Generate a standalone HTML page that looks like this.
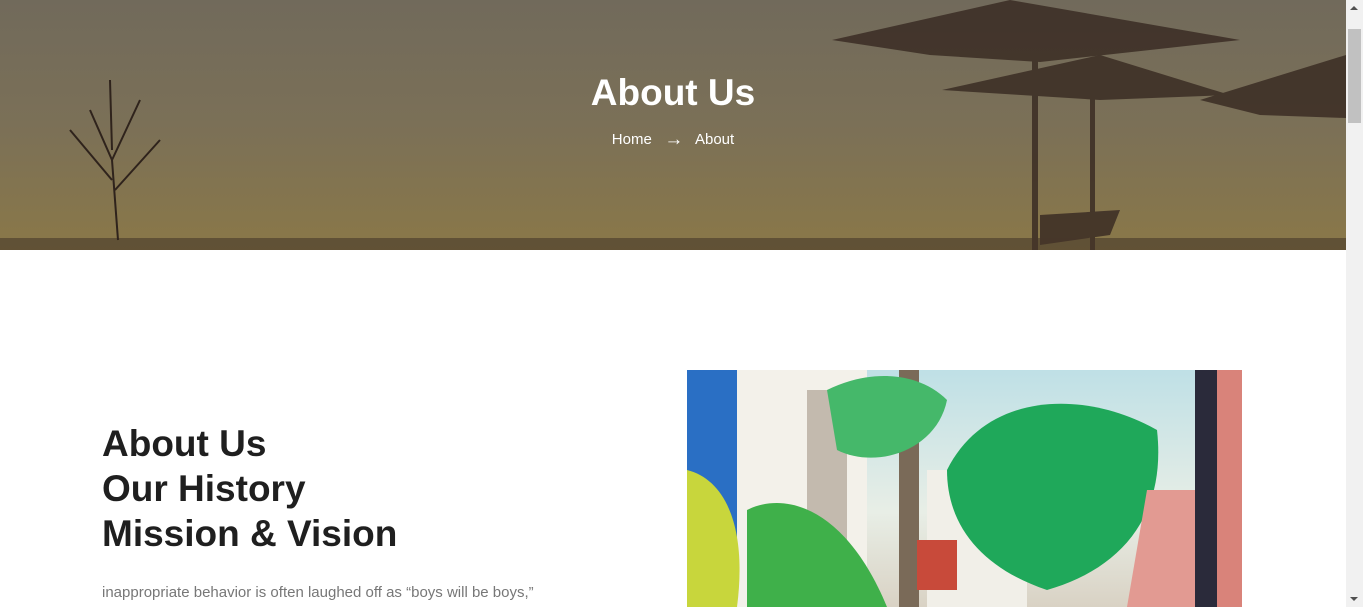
<!DOCTYPE html>
<html><head><meta charset="utf-8"><style>
html,body{margin:0;padding:0;width:1363px;height:607px;overflow:hidden;background:#fff;font-family:"Liberation Sans",sans-serif}
.hero{position:absolute;left:0;top:0;width:1346px;height:250px;background:linear-gradient(180deg,#716a5b 0%,#7b7057 50%,#8a7848 100%);overflow:hidden}
.hero h1{position:absolute;left:0;width:1346px;top:72px;margin:0;text-align:center;color:#fff;font-size:37px;font-weight:700}
.crumb{position:absolute;left:0;width:1346px;top:128px;text-align:center;color:#fff;font-size:15px}
.sb{position:absolute;left:1346px;top:0;width:17px;height:607px;background:#f1f1f1}
.thumb{position:absolute;left:1348px;top:29px;width:13px;height:94px;background:#c1c1c1}
h2{position:absolute;left:102px;top:421px;margin:0;font-size:37px;line-height:45px;font-weight:600;color:#1f1f1f}
p{position:absolute;left:102px;top:584px;margin:0;font-size:15px;color:#777}
.img{position:absolute;left:687px;top:370px;width:555px;height:237px;overflow:hidden;background:linear-gradient(180deg,#bfe0e6 0%,#e8eee6 60%,#d9d2c4 100%)}
</style></head><body>
<div class="hero">
<svg width="1346" height="250" style="position:absolute;left:0;top:0">
<g fill="#3a2c24" opacity=".85">
<path d="M832 40 L1010 0 L1240 40 L1150 50 L1040 62 L930 55Z"/>
<path d="M942 90 L1100 55 L1230 95 L1100 100Z"/>
<path d="M1200 100 L1346 55 L1346 118 L1260 115Z"/>
<rect x="1032" y="40" width="6" height="210"/><rect x="1090" y="80" width="5" height="170"/>
<path d="M1040 215 L1120 210 L1110 235 L1040 245Z"/>
<rect x="0" y="238" width="1346" height="12" opacity=".6"/>
</g>
<g stroke="#2f231c" stroke-width="2" fill="none">
<path d="M118 240 L112 160 L90 110 M112 160 L140 100 M112 180 L70 130 M115 190 L160 140 M112 150 L110 80"/>
</g>
</svg>
<h1>About Us</h1>
<div class="crumb">Home &nbsp;&nbsp;<span style="font-size:19px;font-weight:700;position:relative;top:1px">&#8594;</span>&nbsp;&nbsp; About</div>
</div>
<h2>About Us<br>Our History<br>Mission &amp; Vision</h2>
<p>inappropriate behavior is often laughed off as “boys will be boys,”</p>
<div class="img">
<svg width="555" height="237">
<path d="M0 0 H50 V237 H0Z" fill="#2a6fc4"/>
<path d="M50 0 H180 V237 H50Z" fill="#f3f1ea"/>
<rect x="240" y="100" width="100" height="137" fill="#f1efe8"/>
<rect x="120" y="20" width="40" height="180" fill="#7b6a55" opacity=".4"/>
<rect x="212" y="0" width="20" height="237" fill="#7a6a58"/>
<path d="M260 100 C300 20 400 20 470 60 C480 150 430 200 360 220 C300 200 260 160 260 100Z" fill="#1fa85a"/>
<path d="M140 20 C180 0 230 0 260 30 C250 80 190 100 150 80Z" fill="#45b86a"/>
<path d="M60 140 C100 120 160 140 200 237 H60Z" fill="#3fb04a"/>
<path d="M0 100 C40 110 60 160 50 237 H0Z" fill="#c8d63c"/>
<path d="M460 120 H520 V237 H440Z" fill="#e29a92"/>
<rect x="520" y="0" width="35" height="237" fill="#d9837a"/>
<rect x="508" y="0" width="22" height="237" fill="#2a2a3a"/>
<rect x="230" y="170" width="40" height="50" fill="#c84a3a"/>
</svg>
</div>
<div class="sb"></div><div class="thumb"></div>
<div style="position:absolute;left:1350px;top:6px;width:0;height:0;border-left:4px solid transparent;border-right:4px solid transparent;border-bottom:4px solid #505050"></div>
<div style="position:absolute;left:1350px;top:597px;width:0;height:0;border-left:4px solid transparent;border-right:4px solid transparent;border-top:4px solid #505050"></div>
</body></html>
